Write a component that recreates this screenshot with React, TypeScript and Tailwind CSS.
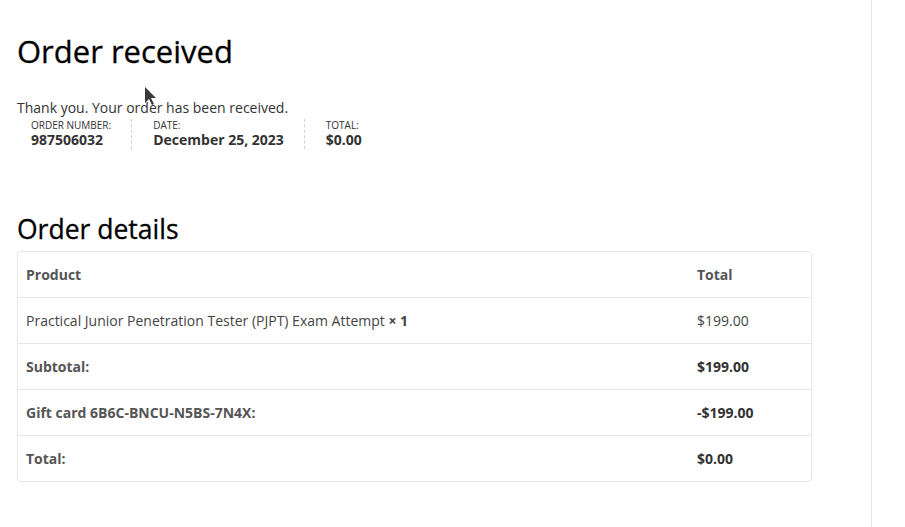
import React from "react";

const rows = [
  { label: "Subtotal:", value: "$199.00" },
  { label: "Gift card 6B6C-BNCU-N5BS-7N4X:", value: "-$199.00" },
  { label: "Total:", value: "$0.00" },
];

const Cursor = () => (
  <svg
    className="absolute left-[144px] top-[86px]"
    width="14"
    height="20"
    viewBox="0 0 14 20"
  >
    <path d="M1 1 L1 17 L5 13 L8 19 L10 18 L7 12 L12 12 Z" fill="#3a3a3a" />
  </svg>
);

const App = () => {
  return (
    <div className="relative w-[872px] min-h-[527px] border-r border-[#e5e5e5] bg-white font-['Open_Sans',sans-serif] text-[#333]">
      <Cursor />
      <div className="px-[17px] pt-[29px] pb-[44px]">
        <h1 className="text-[31px] leading-[44px] text-black [-webkit-text-stroke:0.3px_black]">Order received</h1>
        <p className="mt-[25px] text-[14px] leading-[20px] text-[#333]">
          Thank you. Your order has been received.
        </p>
        <ul className="flex pl-[14px] mt-[1px]">
          <li className="pr-[20px] mr-[21px] border-r border-dashed border-[#cfcfcf] text-[10px] leading-[12px] uppercase text-[#333]">
            Order number:
            <strong className="block text-[14px] leading-[18px] font-bold normal-case">987506032</strong>
          </li>
          <li className="pr-[20px] mr-[21px] border-r border-dashed border-[#cfcfcf] text-[10px] leading-[12px] uppercase text-[#333]">
            Date:
            <strong className="block text-[14px] leading-[18px] font-bold normal-case">December 25, 2023</strong>
          </li>
          <li className="text-[10px] leading-[12px] uppercase text-[#333]">
            Total:
            <strong className="block text-[14px] leading-[18px] font-bold normal-case">$0.00</strong>
          </li>
        </ul>

        <h2 className="mt-[62px] text-[26.5px] leading-[36px] text-black [-webkit-text-stroke:0.3px_black]">Order details</h2>
        <div className="mt-[4px] w-[795px] border border-[#e6e6e6] rounded-[4px] text-[14px]">
          <div className="flex h-[45px] items-center text-[#555] font-bold">
            <div className="w-[679px] px-[8px]">Product</div>
            <div>Total</div>
          </div>
          <div className="flex h-[46px] items-center border-t border-[#e6e6e6] text-[#444]">
            <div className="w-[679px] px-[8px]">
              Practical Junior Penetration Tester (PJPT) Exam Attempt <strong className="font-bold">× 1</strong>
            </div>
            <div>$199.00</div>
          </div>
          {rows.map((r) => (
            <div key={r.label} className="flex h-[46px] items-center border-t border-[#e6e6e6] font-bold">
              <div className="w-[679px] px-[8px] text-[#555]">{r.label}</div>
              <div className="text-[#333]">{r.value}</div>
            </div>
          ))}
        </div>
      </div>
    </div>
  );
};

export default App;
